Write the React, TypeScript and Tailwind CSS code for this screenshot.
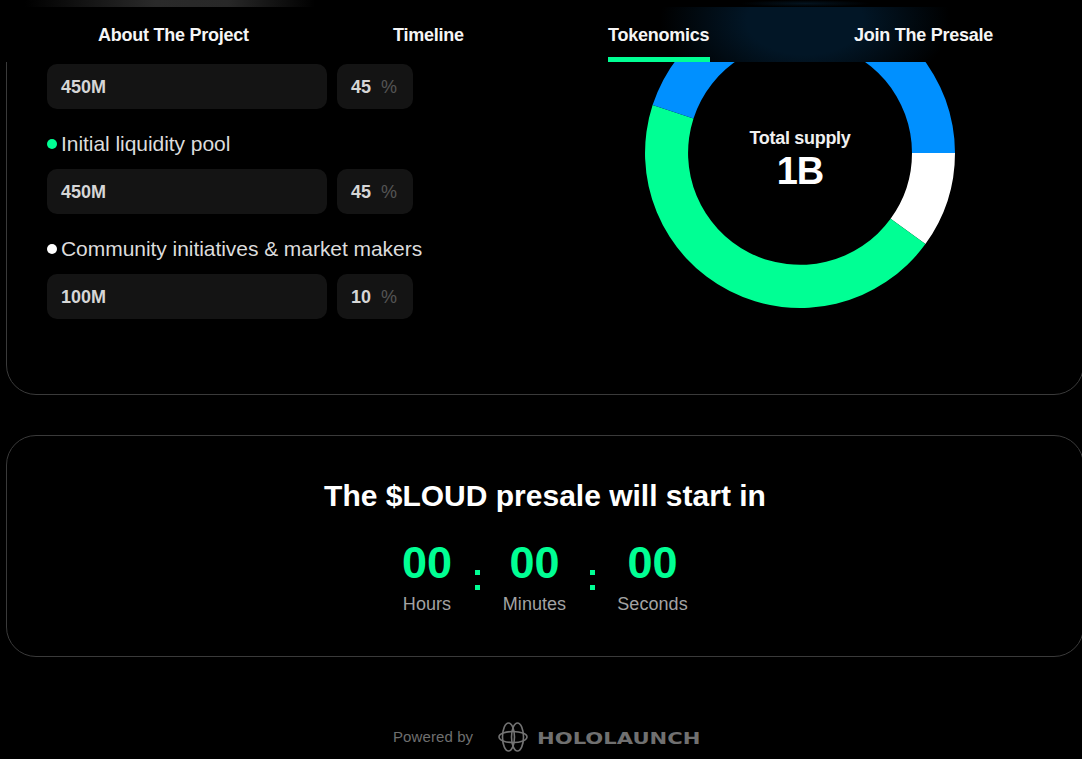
const font = { fontFamily: '"Liberation Sans", Arial, sans-serif' };

function Field({ value, pct }: { value: string; pct: string }) {
  return (
    <div className="flex gap-[10px]">
      <div className="flex h-[45px] w-[280px] items-center rounded-[10px] bg-[#141414] pt-[1px] pl-[14px] text-[18px] font-bold text-[#d6d6d6]">
        {value}
      </div>
      <div className="flex h-[45px] w-[76px] items-center gap-[10px] rounded-[10px] bg-[#141414] pt-[1px] pl-[14px] text-[18px]">
        <span className="font-bold text-[#d6d6d6]">{pct}</span>
        <span className="text-[#555555]">%</span>
      </div>
    </div>
  );
}

function Label({ color, text }: { color: string; text: string }) {
  return (
    <div className="mt-[23px] mb-[13px] flex h-[24px] items-center gap-[4px] text-[21px] tracking-[-0.05px] text-[#dcdcdc]">
      <span className={`h-[10px] w-[10px] rounded-full ${color}`} />
      <span>{text}</span>
    </div>
  );
}

function Unit({ value, label, width }: { value: string; label: string; width: string }) {
  return (
    <div className={`flex flex-col items-center ${width}`}>
      <div className="h-[50px] text-[45px] leading-[50px] font-bold text-[#00ff94]">{value}</div>
      <div className="mt-[5px] text-[18px] leading-[22px] tracking-[0.05px] whitespace-nowrap text-[#a3a3a3]">{label}</div>
    </div>
  );
}

function Colon() {
  return (
    <div className="flex w-[50px] flex-col items-center gap-[10px] pt-[32px]">
      <span className="h-[5px] w-[5px] bg-[#00ff94]" />
      <span className="h-[5px] w-[5px] bg-[#00ff94]" />
    </div>
  );
}

function Donut() {
  return (
    <div className="relative h-[310px] w-[310px]">
      <svg width="310" height="310" viewBox="0 0 310 310" className="block">
        <path d="M310 155 A155 155 0 0 1 280.4 246.1 L245.6 220.8 A112 112 0 0 0 267 155 Z" fill="#ffffff" />
        <path d="M280.4 246.1 A155 155 0 0 1 7.6 107.1 L48.5 120.4 A112 112 0 0 0 245.6 220.8 Z" fill="#00ff94" />
        <path d="M7.6 107.1 A155 155 0 0 1 310 155 L267 155 A112 112 0 0 0 48.5 120.4 Z" fill="#0090ff" />
      </svg>
      <div className="absolute inset-0 flex flex-col items-center justify-center pt-[12px]">
        <div className="text-[18px] leading-[24px] font-bold tracking-[-0.3px] text-[#f0f0f0]">Total supply</div>
        <div className="text-[38px] leading-[42px] font-bold tracking-[-1px] text-white">1B</div>
      </div>
    </div>
  );
}

function Logo() {
  return (
    <svg width="30" height="30" viewBox="0 0 30 30" fill="none" stroke="#737373" strokeWidth="1.6" className="block">
      <ellipse cx="10.5" cy="15" rx="6" ry="14" />
      <ellipse cx="19.5" cy="15" rx="6" ry="14" />
      <ellipse cx="15" cy="15" rx="14" ry="5.5" />
    </svg>
  );
}

function Nav() {
  const items = [
    { t: "About The Project", w: "left-[98px]" },
    { t: "Timeline", w: "left-[393px]" },
    { t: "Tokenomics", w: "left-[608px]" },
    { t: "Join The Presale", w: "left-[854px]" },
  ];
  return (
    <div className="absolute inset-x-0 top-0 z-10 h-[62px] overflow-hidden bg-black">
      <div className="absolute top-0 left-[25px] h-[7px] w-[290px] bg-[linear-gradient(90deg,#000000,#2a2a2a_45%,#282828_70%,#000000)]" />
      <div className="absolute top-0 left-[740px] h-[7px] w-[130px] bg-[radial-gradient(closest-side,#03131f,#000000)]" />
      <div className="absolute top-[7px] left-[660px] h-[55px] w-[290px] bg-[radial-gradient(ellipse_145px_85px_at_50%_25%,#021626_40%,#000000)]" />
      {items.map((i) => (
        <div key={i.t} className={`absolute top-[24px] text-[18px] leading-[22px] font-bold tracking-[-0.25px] text-[#f5f5f5] ${i.w}`}>
          {i.t}
        </div>
      ))}
      <div className="absolute top-[57px] left-[608px] h-[5px] w-[102px] bg-[#00ff94]" />
    </div>
  );
}

export default function App() {
  return (
    <div className="relative h-[759px] w-[1082px] overflow-hidden bg-black" style={font}>
      <Nav />
      <section className="mt-[-40px] ml-[6px] flex h-[435px] w-[1078px] rounded-[30px] border border-[#3a3a3a] pl-[40px]">
        <div className="w-[400px] pt-[103px]">
          <Field value="450M" pct="45" />
          <Label color="bg-[#00ff94]" text="Initial liquidity pool" />
          <Field value="450M" pct="45" />
          <Label color="bg-white" text="Community initiatives & market makers" />
          <Field value="100M" pct="10" />
        </div>
        <div className="mt-[37px] ml-[198px] h-[310px]">
          <Donut />
        </div>
      </section>
      <section className="mt-[40px] ml-[6px] flex h-[222px] w-[1078px] flex-col items-center rounded-[30px] border border-[#3a3a3a]">
        <h2 className="mt-[42px] text-[30px] leading-[36px] font-bold text-white">The $LOUD presale will start in</h2>
        <div className="mt-[24px] flex">
          <Unit value="00" label="Hours" width="w-[50px]" />
          <Colon />
          <Unit value="00" label="Minutes" width="w-[65px]" />
          <Colon />
          <Unit value="00" label="Seconds" width="w-[71px]" />
        </div>
      </section>
      <footer className="mt-[65px] flex items-center pl-[393px]">
        <span className="text-[15px] tracking-[0.1px] text-[#6f6f6f]">Powered by</span>
        <span className="ml-[25px] flex"><Logo /></span>
        <span className="ml-[9px] origin-left scale-x-[1.32] pt-[4px] text-[16px] font-bold text-[#707070]" style={{ fontFamily: '"DejaVu Sans", sans-serif' }}>HOLOLAUNCH</span>
      </footer>
    </div>
  );
}
